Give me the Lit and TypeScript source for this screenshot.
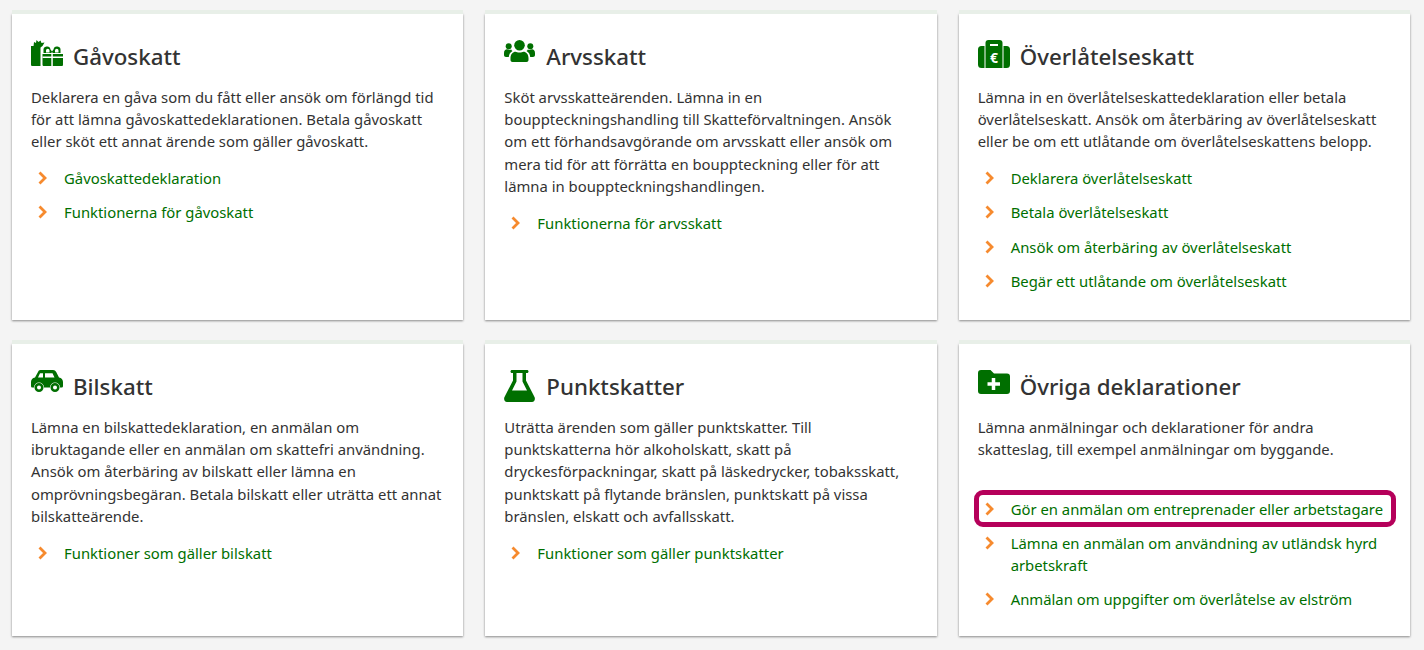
import { LitElement, html, css, svg } from "lit";
import { customElement } from "lit/decorators.js";

const icons = {
  gift: svg`<path d="M0 6h9.500v20H1.500C.5 26 0 25.500 0 24.500z"/><path d="M2.500 6.500L3 2l2 1L5.500 0l2 2L9.500 .5l1 2.500 3-.5L11.500 6 9.500 7.500z"/><path d="M11.500 14h20.500v10.500c0 1-.5 1.500-1.500 1.500H13c-1 0-1.500-.5-1.500-1.500z"/><path fill-rule="evenodd" d="M12.500 13V10.500a3.500 3.500 0 0 1 7-1l1.500 2 1.500-2a3.500 3.500 0 0 1 7 1V13zM15 10.500V12.500h3.500v-2a1.700 1.700 0 0 0-3.500 0zM24 12.500h3.500v-2a1.700 1.700 0 0 0-3.500 0z"/><path fill="#fff" d="M20.300 12.500h1.500V26h-1.500zM11.500 16.500h20.500V18H11.500z"/>`,
  people: svg`<circle cx="15.500" cy="5.300" r="5.300"/><circle cx="4.700" cy="6.300" r="3"/><circle cx="26.300" cy="6.300" r="3"/><path d="M6.500 18c0-4 2.500-6.300 5-6.300 1.200 0 2 .8 4 .8s2.800-.8 4-.8c2.500 0 5 2.300 5 6.300v2c0 1.200-.8 2-2 2h-14c-1.200 0-2-.8-2-2z"/><path d="M0 13c0-2.500 1.500-3.700 3-3.700 1 0 1.700 .5 2.500 .5.700 0 1.200-.2 1.700-.4.300 .8 .8 1.200 1.300 1.500C6 12.300 5 14.300 4.800 17H2c-1.200 0-2-.8-2-2zM31 13c0-2.500-1.500-3.700-3-3.700-1 0-1.700 .5-2.500 .5-.7 0-1.200-.2-1.700-.4-.3 .8-.8 1.200-1.300 1.500 2.500 1.400 3.500 3.400 3.700 6.100H29c1.200 0 2-.8 2-2z"/>`,
  case: svg`<path d="M6.500 6v22H3.500A3.500 3.500 0 0 1 0 24.500V9.500A3.500 3.500 0 0 1 3.500 6zM25.500 6v22h3a3.500 3.500 0 0 0 3.500-3.500V9.500A3.500 3.500 0 0 0 28.500 6z"/><path d="M7.500 3a3 3 0 0 1 3-3h11a3 3 0 0 1 3 3v25H7.500z"/><rect fill="#fff" x="12" y="4" width="8" height="2"/><text x="16" y="23" text-anchor="middle" fill="#fff" font-family="Noto Sans, sans-serif" font-weight="700" font-size="14">€</text>`,
  car: svg`<path fill-rule="evenodd" d="M9.500 0h12.500c1.500 0 2.500 .7 3.200 2l2.800 5.500c2.500 .5 4 2.200 4 4.500v4c0 1-.7 1.500-1.500 1.500H29a5 5 0 0 0-10 0h-6a5 5 0 0 0-10 0H1.500C.7 17.500 0 17 0 16v-4c0-2.300 1.500-4 4-4.500L7 2C7.500 .7 8 0 9.500 0zM9 3.300L7 7.500h5V3.300zM14 3.300v4.200h9.500L21.500 3.300z"/><path fill-rule="evenodd" d="M8 13a4.500 4.500 0 1 1 0 9 4.500 4.500 0 0 1 0-9zm0 2.500a2 2 0 1 0 0 4 2 2 0 0 0 0-4zM24 13a4.500 4.500 0 1 1 0 9 4.500 4.500 0 0 1 0-9zm0 2.500a2 2 0 1 0 0 4 2 2 0 0 0 0-4z"/>`,
  flask: svg`<path fill-rule="evenodd" d="M8 0h15c1 0 1.500 .7 1.500 1.500S24 3 23 3h-1v7.500l8.500 16.500c1 2.200 0 5-2.500 5H3C.5 32-.5 29.200 .5 27L9 10.500V3H8C7 3 6.500 2.300 6.500 1.500S7 0 8 0zM12.500 3v8.500L8 20.500h15L18.500 11.500V3z"/>`,
  folder: svg`<path d="M3 0h9.500l3.500 3.500H29a3 3 0 0 1 3 3V21a3 3 0 0 1-3 3H3a3 3 0 0 1-3-3V3a3 3 0 0 1 3-3z"/><path fill="#fff" d="M13.750 8h3.500v4.250H22v3.500h-4.750V20h-3.500v-4.250H9.500v-3.500h4.250z"/>`,
};

type Card = {
  icon: keyof typeof icons;
  vb: string;
  title: string;
  text: string;
  links: string[];
  gap?: boolean;
  focus?: number;
};

const cards: Card[] = [
  {
    icon: "gift",
    vb: "0 0 32 26",
    title: "Gåvoskatt",
    text: "Deklarera en gåva som du fått eller ansök om förlängd tid för att lämna gåvoskattedeklarationen. Betala gåvoskatt eller sköt ett annat ärende som gäller gåvoskatt.",
    links: ["Gåvoskattedeklaration", "Funktionerna för gåvoskatt"],
  },
  {
    icon: "people",
    vb: "0 0 32 22",
    title: "Arvsskatt",
    text: "Sköt arvsskatteärenden. Lämna in en bouppteckningshandling till Skatteförvaltningen. Ansök om ett förhandsavgörande om arvsskatt eller ansök om mera tid för att förrätta en bouppteckning eller för att lämna in bouppteckningshandlingen.",
    links: ["Funktionerna för arvsskatt"],
  },
  {
    icon: "case",
    vb: "0 0 32 28",
    title: "Överlåtelseskatt",
    text: "Lämna in en överlåtelseskattedeklaration eller betala överlåtelseskatt. Ansök om återbäring av överlåtelseskatt eller be om ett utlåtande om överlåtelseskattens belopp.",
    links: [
      "Deklarera överlåtelseskatt",
      "Betala överlåtelseskatt",
      "Ansök om återbäring av överlåtelseskatt",
      "Begär ett utlåtande om överlåtelseskatt",
    ],
  },
  {
    icon: "car",
    vb: "0 0 32 22",
    title: "Bilskatt",
    text: "Lämna en bilskattedeklaration, en anmälan om ibruktagande eller en anmälan om skattefri användning. Ansök om återbäring av bilskatt eller lämna en omprövningsbegäran. Betala bilskatt eller uträtta ett annat bilskatteärende.",
    links: ["Funktioner som gäller bilskatt"],
  },
  {
    icon: "flask",
    vb: "0 0 32 32",
    title: "Punktskatter",
    text: "Uträtta ärenden som gäller punktskatter. Till punktskatterna hör alkoholskatt, skatt på dryckesförpackningar, skatt på läskedrycker, tobaksskatt, punktskatt på flytande bränslen, punktskatt på vissa bränslen, elskatt och avfallsskatt.",
    links: ["Funktioner som gäller punktskatter"],
  },
  {
    icon: "folder",
    vb: "0 0 32 24",
    title: "Övriga deklarationer",
    text: "Lämna anmälningar och deklarationer för andra skatteslag, till exempel anmälningar om byggande.",
    links: [
      "Gör en anmälan om entreprenader eller arbetstagare",
      "Lämna en anmälan om användning av utländsk hyrd arbetskraft",
      "Anmälan om uppgifter om överlåtelse av elström",
    ],
    gap: true,
    focus: 0,
  },
];

@customElement("app-root")
export class AppRoot extends LitElement {
  static styles = css`
    :host {
      display: block;
      height: 650px;
      overflow: hidden;
      background: #f4f4f4;
      font-family: "Noto Sans", "Open Sans", sans-serif;
      font-size: 14.85px;
      line-height: 22.275px;
      color: #333333;
    }
    .grid {
      display: grid;
      grid-template-columns: repeat(3, 1fr);
      grid-template-rows: 306px 292px;
      column-gap: 22px;
      row-gap: 24px;
      padding: 14px 14px 0 12px;
    }
    .card {
      background: #ffffff;
      padding: 23px 19px 0;
      box-shadow:
        0 -4px 0 #e8efe8,
        0 1px 2px #8f8f8f,
        0 0 3px #dddddd;
    }
    .head {
      display: flex;
      align-items: flex-start;
      height: 38px;
      margin-bottom: 10.75px;
    }
    .icon {
      flex: none;
      width: 32px;
      margin: 3px 10px 0 0;
      fill: #006f00;
    }
    h2 {
      margin: 0;
      font-size: 22.3px;
      line-height: 40px;
      font-weight: 500;
      color: #333333;
    }
    p {
      margin: 0;
    }
    ul {
      list-style: none;
      margin: 0;
      padding: 14.4px 0 0;
    }
    ul.spaced {
      padding-top: 29.2px;
    }
    li {
      display: flex;
      margin-bottom: 12.2px;
      padding-left: 7px;
      color: #006f00;
    }
    li.focus {
      box-sizing: border-box;
      height: 37px;
      margin: 0 -5px 5px -4px;
      padding: 3.25px 0 0 6px;
      border: 5px solid #b5005a;
      border-radius: 9px;
    }
    .chev {
      flex: none;
      width: 9px;
      height: 22px;
      margin-right: 17px;
      fill: none;
      stroke: #f68a2e;
      stroke-width: 2.8;
    }
  `;

  render() {
    return html`<div class="grid">
      ${cards.map(
        (c) => html`<section class="card">
          <div class="head">
            <svg class="icon" viewBox=${c.vb}>${icons[c.icon]}</svg>
            <h2>${c.title}</h2>
          </div>
          <p>${c.text}</p>
          <ul class=${c.gap ? "spaced" : ""}>
            ${c.links.map(
              (l, i) => html`<li class=${c.focus === i ? "focus" : ""}>
                <svg class="chev" viewBox="0 0 9 22"><path d="M1.500 5.500l5.500 5.500-5.500 5.500" /></svg>
                <span>${l}</span>
              </li>`,
            )}
          </ul>
        </section>`,
      )}
    </div>`;
  }
}
